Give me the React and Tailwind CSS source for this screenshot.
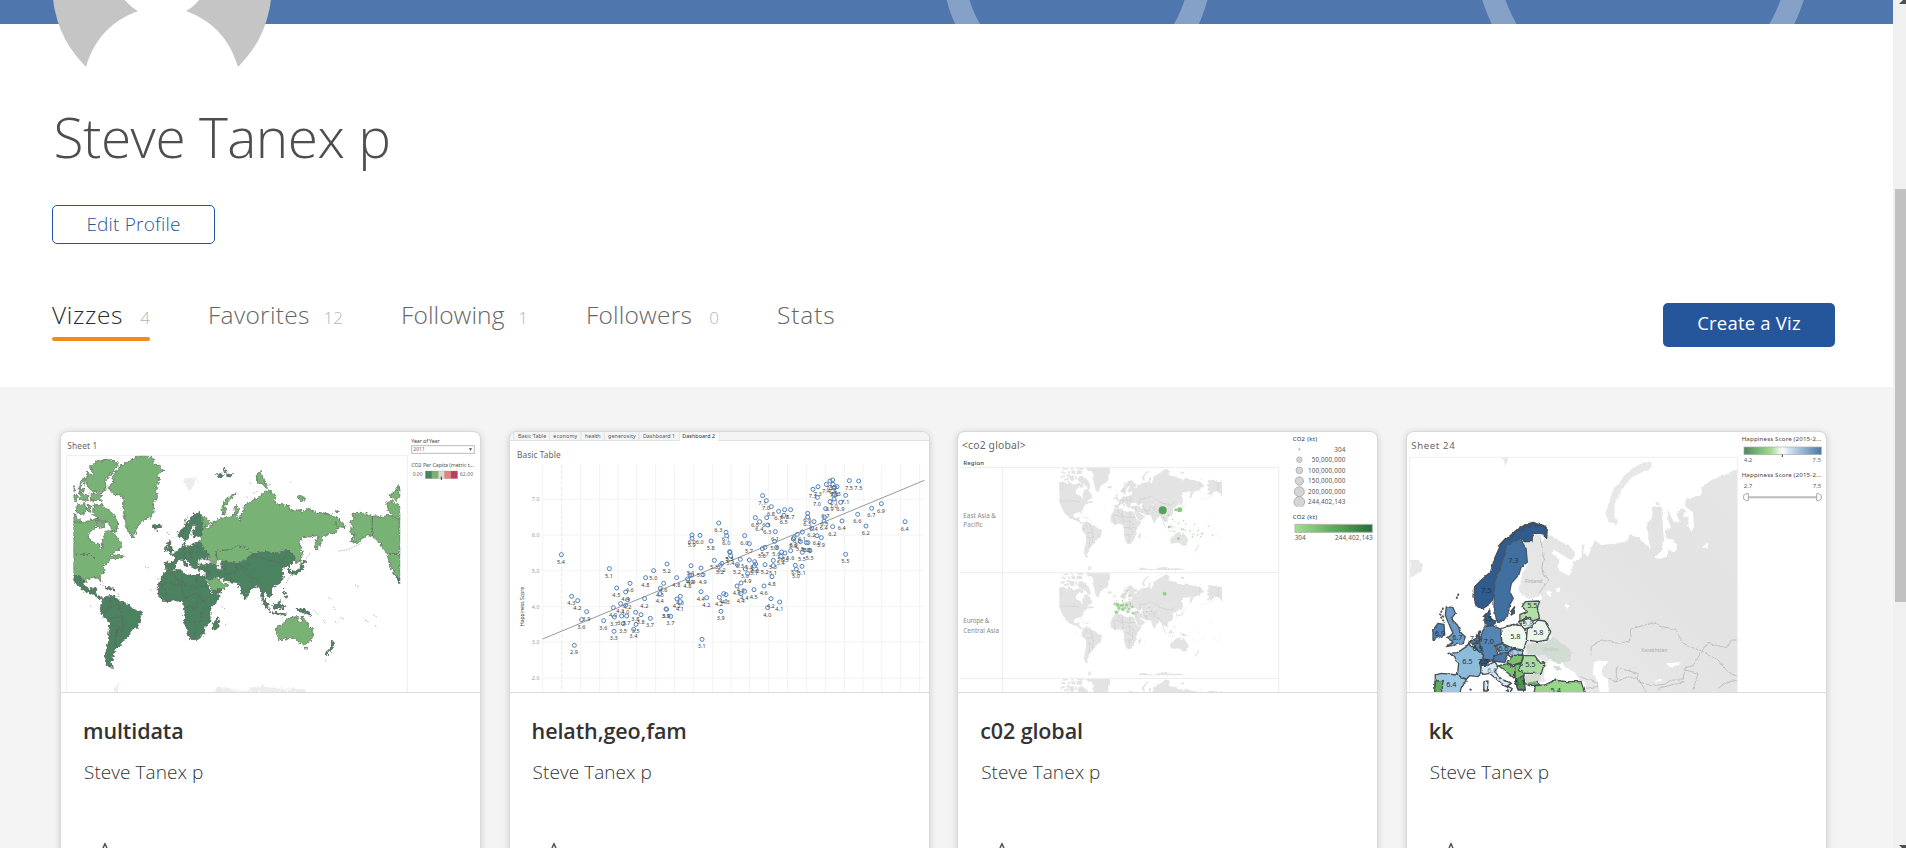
const INK = "#666";

/* World map outlines, shared by the two world-map thumbnails. */
const LIGHT = [
  "265,93 295,92 312,103 308,115 328,122 339,135 325,150 328,170 318,185 322,215 310,235 312,262 298,280 278,288 262,305 252,335 243,333 233,315 225,285 220,255 222,225 212,210 190,208 174,188 190,172 188,155 205,130 220,118 240,108",
  "122,125 140,108 170,103 195,108 205,120 190,140 178,155 165,160 168,185 158,203 130,200 112,185 108,165 112,142 130,152",
  "70,288 95,288 110,292 120,285 142,280 145,300 130,312 116,325 115,342 130,352 148,357 152,375 158,372 156,350 162,338 165,318 185,318 200,335 212,352 215,370 198,378 180,392 215,388 225,395 205,402 188,400 175,410 160,425 165,435 150,450 152,470 145,460 128,457 112,462 105,470 70,452",
  "130,240 155,238 175,255 190,268 203,292 200,322 188,318 180,300 165,290 148,285 128,265",
  "78,240 104,236 108,258 96,272 80,262", "112,238 122,240 122,262 112,258", "70,262 80,278 100,290 70,292",
  "120,205 154,207 153,226 122,228", "88,205 112,210 114,226 92,225", "70,180 76,186 74,198 70,200", "84,188 104,192 100,202 88,198",
  "98,158 106,162 104,178 96,172", "136,285 158,290 164,308 145,310", "70,208 82,212 80,226 70,224", "92,172 98,180 94,188 88,182",
  "455,275 470,280 482,295 470,305 462,300 468,312 482,308 485,292 500,288 515,280 530,278 545,275 555,268 552,250 562,240 565,255 560,275 570,285 575,265 580,260 578,245 600,230 620,220 640,205 655,195 672,205 680,215 668,228 685,238 720,242 722,255 750,255 760,262 775,250 800,262 830,265 860,275 880,295 885,308 868,305 855,325 840,325 830,332 818,335 815,350 800,373 795,358 800,345 805,330 785,335 755,338 745,360 752,365 758,385 750,410 738,415 735,395 710,372 690,385 640,380 605,388 580,410 540,415 520,405 505,405 500,415 490,415 478,405 475,388 455,370 448,350 455,330 450,305",
  "558,205 540,212 525,228 513,250 515,265 530,267 524,245 538,225",
  "622,145 634,140 640,165 654,182 650,190 634,178 622,172", "742,215 760,212 765,224 748,226", "856,258 868,260 860,265",
  "468,458 480,452 500,460 520,475 533,480 520,495 488,500",
  "680,605 700,598 712,582 725,577 745,575 742,587 752,592 757,573 768,590 785,612 789,630 778,652 765,658 750,655 735,640 715,640 688,645 680,625",
  "765,667 773,667 770,676",
  "905,265 930,262 945,265 967,275 980,272 1000,278 1015,268 1035,280 1050,280 1050,463 1035,448 1020,425 1012,390 1000,370 985,350 968,333 945,332 925,352 900,350 915,330 898,318 912,305 897,295 912,285",
  "1010,232 1030,230 1050,245 1050,285 1030,275 1015,258", "1015,212 1035,200 1048,180 1050,215 1040,226",
];
const DARK = [
  "70,452 90,456 100,465 104,486 118,493 128,488 140,488 135,503 145,512 158,518 150,524 138,515 120,503 100,497 86,482 70,468",
  "158,520 175,512 195,515 210,530 230,535 248,552 275,562 270,580 265,605 245,615 235,635 218,650 205,665 195,675 190,695 183,710 190,727 175,725 165,705 168,680 175,650 178,610 178,590 160,575 150,550 155,535",
  "385,335 385,322 400,310 415,290 430,268 450,262 456,275 456,332 430,335 428,318 440,302 433,297 420,318 415,340 405,350 398,335",
  "345,412 372,412 374,395 362,390 382,380 395,365 400,352 408,365 440,355 452,352 462,372 478,388 472,402 455,398 448,405 442,418 438,432 428,428 420,414 408,401 400,401 415,420 410,426 395,405 382,408 375,425 365,435 348,432",
  "352,350 362,348 362,362 372,375 365,382 352,378 355,365", "343,378 345,365 352,365 350,377", "308,300 330,298 332,308 318,315 308,310",
  "442,422 455,418 480,415 500,420 520,405 540,415 580,412 605,388 640,380 690,385 710,372 735,395 735,405 715,425 705,425 695,432 700,455 690,475 668,485 662,495 668,510 658,518 650,505 640,500 642,520 655,540 645,535 635,515 630,490 620,480 605,492 592,508 590,522 582,520 575,505 568,480 560,472 530,470 515,460 495,455 480,465 468,458 468,438 445,435",
  "488,500 515,488 517,498 492,508",
  "345,437 370,435 392,434 400,447 425,452 445,448 465,455 470,475 485,505 510,512 500,530 485,545 480,560 480,590 465,605 462,625 445,643 420,643 412,620 403,590 405,560 400,548 398,530 370,525 345,530 325,510 325,480 335,460",
  "505,577 508,590 500,612 490,612 490,595", "715,432 722,430 722,443 716,443",
  "718,440 738,438 750,430 754,414 766,406 768,410 758,415 758,434 740,446 722,448",
  "668,540 680,538 690,526 693,550 675,553", "634,518 645,530 660,556 652,552", "658,560 690,564 712,568 690,570", "698,540 704,542 700,556 696,552", "735,550 750,552 770,556 785,572 772,566 750,562",
  "700,492 706,508 713,520 704,516", "845,645 855,656 848,664 846,655", "846,663 850,668 832,689 825,686", "160,484 180,490 196,494 184,496", "1034,450 1050,462 1050,476",
  "500,150 520,148 515,158 502,155", "520,133 530,136 524,144", "530,148 548,146 542,156 532,154",
];
const BORDERS =
  "M70 388H118L135 398 M967 275V333 M1014 388H1050 M498 378L540 374L560 362L585 366L604 386 M498 378L502 405 M606 390L640 402L690 412L708 392 M330 488L352 470L400 488L398 520 M362 438L398 486 M395 447V478L440 490V450 M440 485H472 M345 488L350 526 M400 520L440 505L470 540 M440 505V545L405 548 M425 550L455 560V590H412 M435 590V640 M455 545L478 552 M180 520L184 545L160 560 M200 520L215 575L180 580 M215 575L222 600L200 612L185 600 M200 612L196 670 M222 600L212 640 M520 420L530 450L560 440L560 415 M540 445L545 470 M590 430L575 460 M590 450L620 465L632 485 M600 420L570 432 M403 300L412 275 M400 340L398 320L415 290 M438 270L434 296 M400 370L405 398 M418 360L425 400 M440 356L446 396 M385 382L400 392 M405 382L440 384 M365 412L385 406 M470 420L478 452 M858 275V305 M645 487L655 500 M760 552V564";
const ANTARCTICA = [
  "490,801 500,788 530,787 550,795 590,798 600,790 640,782 680,790 700,793 730,790 765,796 770,801", "190,801 195,785 215,770 205,785 206,801",
];
const SPECKS =
  "M285 425l12 4 M300 495l8 3 M322 462h10 M355 330l5 -8 M350 322l6 2 M515 545l10 6 M525 600l8 -4 M610 205l12 -6 M590 215l4 6 M600 172l4 8 M720 170l6 6 M915 480l14 8 M835 518l10 4 M850 545l6 10 M870 578l12 4 M945 585l14 8 M970 570l10 6 M975 602l8 4 M820 585l8 14 M855 590l8 4 M120 543l8 2 M865 378l30 -4l40 -20 M780 385l-12 18 M722 450l-14 26 M825 706l6 4 M790 555l14 14 M500 150l30 -14 M150 478l20 8l26 4 M205 505l2 12 M150 462l12 14";

function Polys({ list }) {
  return list.map((p) => <polygon key={p} points={p} />);
}

function Roughen({ id, scale, freq }) {
  return (
    <filter id={id} x="-5%" y="-5%" width="110%" height="110%">
      <feTurbulence type="fractalNoise" baseFrequency={freq} numOctaves="2" seed="4" />
      <feDisplacementMap in="SourceGraphic" scale={scale} xChannelSelector="R" yChannelSelector="G" />
    </filter>
  );
}

function Thumb({ x, children }) {
  return (
    <svg
      className="block h-[260px] w-full font-['Noto_Sans',sans-serif]"
      viewBox={`${x} 21 1257 780`}
      preserveAspectRatio="none"
    >
      {children}
    </svg>
  );
}

function CarbonMap() {
  return (
    <Thumb x={33}>
      <defs>
        <Roughen id="coast" scale="16" freq="0.12" />
        <clipPath id="world"><rect x="70" y="92" width="981" height="709" /></clipPath>
      </defs>
      <text x="52" y="71" fontSize="25" fill={INK} textLength="90">Sheet 1</text>
      <path d="M49 801V92H1072V801" fill="none" stroke="#eee" strokeWidth="3" />
      <g clipPath="url(#world)">
        <g filter="url(#coast)" strokeWidth="3" stroke="#6f7f70" strokeLinejoin="round">
          <g fill="#79b275"><Polys list={LIGHT} /></g>
          <g fill="#4b825f" stroke="#5f7064"><Polys list={DARK} /></g>
          <g fill="#fff" stroke="#8a8a8a" strokeWidth="2">
            <path d="M503 402L512 403L510 420L518 433L505 433L498 418Z M448 405L465 400L485 412L460 419L446 415Z" />
          </g>
          <path d={BORDERS} fill="none" stroke="#5e6a61" strokeWidth="2.5" />
        </g>
        <path d={SPECKS} fill="none" stroke="#9a9f9a" strokeWidth="2.500" strokeDasharray="4 4" />
        <g fill="#ececec" filter="url(#coast)">
          <Polys list={ANTARCTICA} />
          <polygon points="400,165 415,158 445,158 430,180 420,200 412,185" />
        </g>
      </g>
      <text x="1084" y="54" fontSize="16" fill="#444" textLength="85">Year of Year</text>
      <rect x="1085" y="62" width="188" height="23" fill="#fff" stroke="#bbb" strokeWidth="3" />
      <text x="1090" y="78" fontSize="15" fill={INK}>2011</text>
      <path d="M1257 70h9l-4.500 7z" fill="#444" />
      <text x="1084" y="125" fontSize="16" fill="#555" textLength="187">CO2 Per Capita (metric t...</text>
      <text x="1088" y="154" fontSize="15" fill={INK}>0.00</text>
      <g stroke="#999" strokeWidth="1">
        <rect x="1126" y="138" width="20" height="23" fill="#4b825f" />
        <rect x="1146" y="138" width="19" height="23" fill="#79b275" />
        <rect x="1165" y="138" width="19" height="23" fill="#d8dccb" />
        <rect x="1184" y="138" width="18" height="23" fill="#f28072" />
        <rect x="1202" y="138" width="21" height="23" fill="#bd3d5e" />
      </g>
      <path d="M1174 155v10" stroke="#333" strokeWidth="3" />
      <text x="1229" y="154" fontSize="15" fill={INK} textLength="40">62.00</text>
    </Thumb>
  );
}

const POINTS = [
  [183, 389, 5.4], [327, 431, 5.1], [214, 514, 4.3], [232, 527, 4.2], [259, 560, 3.9], [244, 584, 3.6], [222, 661, 2.9], [310, 587, 3.6],
  [341, 619, 3.3], [342, 576, 3.7], [339, 548, 4.0], [349, 489, 4.5], [389, 475, 4.6], [376, 501, 4.4], [382, 524, 4.2], [361, 536, 4.1],
  [376, 541, 4.0], [364, 573, 3.7], [379, 573, 3.7], [369, 596, 3.5], [407, 598, 3.5], [400, 613, 3.4], [406, 562, 3.8], [422, 569, 3.8],
  [450, 580, 3.7], [433, 521, 4.2], [436, 458, 4.8], [460, 437, 5.0], [500, 417, 5.2], [490, 475, 4.6], [480, 490, 4.5], [479, 506, 4.4],
  [529, 458, 4.8], [530, 522, 4.2], [540, 514, 4.3], [540, 530, 4.1], [497, 552, 3.9], [499, 553, 3.9], [511, 574, 3.7], [605, 643, 3.1],
  [572, 422, 5.1], [602, 429, 5.1], [569, 450, 4.9], [574, 450, 4.9], [562, 462, 4.8], [608, 449, 4.9], [602, 500, 4.4], [619, 518, 4.2],
  [657, 517, 4.2], [670, 506, 4.3], [677, 509, 4.3], [662, 559, 3.9], [575, 330, 6.0], [575, 340, 5.9], [599, 331, 6.0], [632, 348, 5.8],
  [655, 294, 6.3], [677, 322, 6.1], [679, 332, 6.0], [733, 332, 6.0], [747, 356, 5.7], [688, 380, 5.5], [689, 382, 5.5], [691, 392, 5.4], [642, 406, 5.3],
  [660, 421, 5.2], [665, 415, 5.2], [720, 403, 5.3], [711, 419, 5.2], [747, 405, 5.3], [735, 432, 5.0], [742, 446, 4.9], [763, 410, 5.2],
  [766, 417, 5.2], [762, 423, 5.1], [794, 419, 5.2], [819, 406, 5.3], [819, 422, 5.1], [815, 455, 4.8], [722, 474, 4.6], [710, 483, 4.6],
  [733, 499, 4.4], [722, 506, 4.4], [761, 494, 4.5], [791, 483, 4.6], [812, 521, 4.2], [838, 531, 4.1], [802, 548, 4.0], [786, 371, 5.6],
  [794, 367, 5.7], [823, 349, 5.8], [829, 367, 5.6], [844, 381, 5.5], [854, 384, 5.5], [842, 394, 5.4], [871, 377, 5.6], [825, 320, 6.1],
  [802, 300, 6.3], [799, 278, 6.5], [778, 290, 6.4], [765, 278, 6.5], [787, 212, 7.1], [798, 227, 7.0], [813, 245, 6.8], [835, 259, 6.7],
  [853, 254, 6.7], [871, 254, 6.7], [851, 271, 6.5], [879, 342, 5.9], [881, 338, 5.9], [891, 328, 6.0], [906, 321, 6.1], [900, 350, 5.8],
  [918, 353, 5.8], [923, 353, 5.8], [906, 382, 5.5], [929, 377, 5.5], [885, 421, 5.1], [905, 424, 5.1], [888, 433, 5.0], [950, 332, 6.0],
  [963, 338, 5.9], [934, 310, 6.2], [941, 290, 6.4], [922, 265, 6.6], [922, 276, 6.5], [973, 277, 6.5], [971, 288, 6.4], [997, 305, 6.2],
  [1025, 288, 6.4], [976, 251, 6.7], [989, 230, 6.9], [1001, 222, 7.0], [1021, 232, 6.9], [951, 217, 7.0], [938, 193, 7.3], [953, 185, 7.3],
  [978, 178, 7.4], [989, 168, 7.5], [997, 165, 7.5], [998, 178, 7.4], [1001, 189, 7.3], [1003, 187, 7.3], [1010, 185, 7.3], [1002, 210, 7.1], [1036, 211, 7.1],
  [1047, 167, 7.5], [1075, 168, 7.5], [1072, 268, 6.6], [1097, 303, 6.2], [1114, 250, 6.7], [1143, 236, 6.9], [1214, 290, 6.4], [1036, 388, 5.5],
];
const SHEETS = [["Basic Table", 53, 85], ["economy", 159, 72], ["health", 254, 47], ["generosity", 323, 83], ["Dashboard 1", 428, 96], ["Dashboard 2", 546, 98]];

function ScatterPlot() {
  return (
    <Thumb x={29}>
      <rect x="29" y="21" width="1258" height="26" fill="#f4f4f4" />
      <path d="M29 46.500H1287 M40 21V46 M148 21V46 M242 21V46 M312 21V46 M416 21V46" stroke="#ddd" strokeWidth="2.500" />
      <path d="M537 48V21H656V48" fill="#fff" stroke="#ddd" strokeWidth="2" />
      {SHEETS.map(([name, x, w], i) => (
        <text key={name} x={x} y="39" fontSize="16" fill={i === 5 ? "#222" : "#555"} textLength={w}>{name}</text>
      ))}
      <text x="50" y="99" fontSize="25" fill={INK} textLength="131">Basic Table</text>
      <g stroke="#f3f3f3" strokeWidth="3">
        {[127, 241, 298, 353, 409, 466, 522, 579, 637, 692, 748, 805, 862, 919, 975, 1032, 1088, 1144, 1201, 1258].map((x) => (
          <path key={x} d={`M${x} 118V801`} />
        ))}
        {[223, 330, 437, 544, 651, 759].map((y) => <path key={y} d={`M127 ${y}H1272`} />)}
      </g>
      <path d="M184 118V801" stroke="#e6e6e6" strokeWidth="3" strokeDasharray="12 5" />
      {["7.0", "6.0", "5.0", "4.0", "3.0", "2.0"].map((t, i) => (
        <text key={t} x="94" y={229 + i * 107.2} fontSize="16" fill="#999" textLength="24">{t}</text>
      ))}
      <text transform="translate(72 603) rotate(-90)" fontSize="15" fill="#333" textLength="117">Happiness Score</text>
      <path d="M127 642L1272 166" stroke="#999" strokeWidth="3" />
      <g fontSize="16.500" fill="#3c3c3c" textAnchor="middle">
        {POINTS.map(([x, y, v], i) => <text key={i} x={x - 1} y={y + 27} textLength="24">{v.toFixed(1)}</text>)}
      </g>
      <g fill="none" stroke="#4f81bd" strokeWidth="3">
        {POINTS.map(([x, y], i) => <circle key={i} cx={x} cy={y} r="6" />)}
      </g>
    </Thumb>
  );
}

const ASIA_DOTS = [[677, 254, 4.500], [642, 236, 1.5], [641, 278, 2], [655, 270, 2], [667, 283, 2], [657, 306, 4], [645, 287, 2], [685, 295, 2], [701, 287, 2], [707, 296, 2], [733, 298, 2], [745, 316, 2], [720, 318, 2], [757, 326, 2.500], [729, 328, 2], [753, 335, 2], [775, 304, 2], [788, 331, 2], [685, 341, 4], [673, 319, 2], [695, 313, 2], [743, 330, 2], [727, 335, 2]];
const EUROPE_DOTS = [[644, 506, 6], [452, 484, 1.500], [502, 539, 6], [499, 562, 4.500], [518, 553, 5], [530, 540, 4.500], [506, 549, 4.500], [512, 541, 4], [518, 541, 3.500], [533, 560, 3.500], [537, 551, 3], [547, 545, 3.500], [550, 565, 3.500], [562, 562, 2.500], [540, 512, 2], [533, 497, 2], [517, 527, 2], [538, 523, 2], [493, 514, 2], [590, 560, 2], [597, 547, 1.500], [605, 558, 2], [493, 537, 3], [525, 549, 3], [541, 536, 2.500], [528, 506, 1.500], [517, 516, 1.500]];

function GreyWorld({ dy }) {
  return (
    <g transform={`translate(0 ${dy})`}>
      <g transform="translate(319 33) scale(.502)">
        <g filter="url(#coast-soft)" fill="#e3e3e3">
          <Polys list={LIGHT} />
          <Polys list={DARK} />
          <polygon points="16,278 42,272 92,300 120,290 116,340 70,400 20,390" />
          <polygon points="16,380 80,380 120,450 100,470 104,488 130,492 150,524 120,505 78,490 50,462 32,430 18,390" />
          <path d="M30 215l24 6 M40 200l30 -6 M60 235l30 8 M25 248l26 -8 M45 262l30 -8 M22 190l16 -8" stroke="#e3e3e3" strokeWidth="10" />
          <path d="M503 402L512 403L510 420L518 433L505 433L498 418Z M448 405L465 400L485 412L460 419L446 415Z" fill="#fff" />
          <path d={BORDERS} fill="none" stroke="#c6c6c6" strokeWidth="3" />
          <path d="M20 388H70 M34 278V325" stroke="#cfcfcf" strokeWidth="3" />
          <Polys list={ANTARCTICA} />
        </g>
        <path d={SPECKS} fill="none" stroke="#d8d8d8" strokeWidth="3.500" strokeDasharray="5 5" />
      </g>
    </g>
  );
}

function RegionMaps() {
  return (
    <Thumb x={24}>
      <defs>
        <Roughen id="coast-soft" scale="14" freq="0.08" />
        <clipPath id="r1"><rect x="327" y="128" width="489" height="313" /></clipPath>
        <clipPath id="r2"><rect x="327" y="445" width="489" height="313" /></clipPath>
        <clipPath id="r3"><rect x="327" y="762" width="489" height="39" /></clipPath>
        <linearGradient id="greens"><stop offset="0" stopColor="#a5dd94" /><stop offset=".5" stopColor="#5bab5c" /><stop offset="1" stopColor="#21703c" /></linearGradient>
      </defs>
      <text x="36" y="71" fontSize="31" fill={INK} textLength="191">&lt;co2 global&gt;</text>
      <text x="40" y="119" fontSize="18" fontWeight="500" fill="#444" textLength="62">Region</text>
      <g clipPath="url(#r1)"><GreyWorld dy={0} /></g>
      <g clipPath="url(#r2)"><GreyWorld dy={316} /></g>
      <g clipPath="url(#r3)"><GreyWorld dy={632} /></g>
      <path d="M30 127H986 M30 443H986 M30 760H986 M157 127V801 M986 127V801" stroke="#e8e8e8" strokeWidth="2.500" />
      <g fontSize="19" fill="#888">
        <text x="40" y="278" textLength="98">East Asia &amp;</text>
        <text x="40" y="306" textLength="58">Pacific</text>
        <text x="40" y="594" textLength="78">Europe &amp;</text>
        <text x="40" y="623" textLength="107">Central Asia</text>
      </g>
      <circle cx="638" cy="256" r="12" fill="#55a155" />
      <circle cx="689" cy="254" r="7.500" fill="#84cc7a" />
      <g fill="#8bd07f" fillOpacity=".9">
        {[...ASIA_DOTS, ...EUROPE_DOTS].map(([x, y, r]) => <circle key={`${x}-${y}`} cx={x} cy={y} r={r} />)}
      </g>
      <text x="1028" y="49" fontSize="18" fill="#333" textLength="73">CO2 (kt)</text>
      {[[73, 2, "304", 33], [104, 8, "50,000,000", 101], [136, 10, "100,000,000", 112], [168, 12.500, "150,000,000", 112], [200, 15, "200,000,000", 112], [231, 16, "244,402,143", 112]].map(([y, r, t, w]) => (
        <g key={t}>
          <circle cx="1048" cy={y} r={r} fill="#d5d5d5" stroke="#aaa" strokeWidth="2.500" />
          <text x={1186 - w} y={y + 7} fontSize="19" fill="#555" textLength={w}>{t}</text>
        </g>
      ))}
      <path d="M1030 247h36" stroke="#fff" strokeWidth="4" />
      <text x="1028" y="281" fontSize="18" fill="#333" textLength="73">CO2 (kt)</text>
      <rect x="1035" y="298" width="232" height="24" fill="url(#greens)" stroke="#b5b5a8" strokeWidth="3" />
      <text x="1034" y="344" fontSize="19" fill="#555" textLength="33">304</text>
      <text x="1155" y="344" fontSize="19" fill="#555" textLength="113">244,402,143</text>
    </Thumb>
  );
}

function HappinessMap() {
  return (
    <Thumb x={27}>
      <defs>
        <Roughen id="coast-fine" scale="9" freq="0.07" />
        <clipPath id="eu"><rect x="35" y="97" width="983" height="704" /></clipPath>
        <linearGradient id="score"><stop offset="0" stopColor="#4d8a5f" /><stop offset=".35" stopColor="#a5dc93" /><stop offset=".5" stopColor="#fff" /><stop offset=".58" stopColor="#cfe5f2" /><stop offset="1" stopColor="#4d76a4" /></linearGradient>
        <linearGradient id="terrain" x1="0" y1="1" x2="1" y2="0"><stop offset="0" stopColor="#e9e9e9" /><stop offset=".6" stopColor="#e3e3e3" /><stop offset="1" stopColor="#e5e5e5" /></linearGradient>
      </defs>
      <text x="40" y="71" fontSize="29" fill={INK} textLength="130">Sheet 24</text>
      <g clipPath="url(#eu)">
        <g filter="url(#coast-fine)">
          <path fill="url(#terrain)" d="M1025 130L1000 140L965 155L940 165L910 188L912 208L862 226L866 248L885 262L888 305L880 322L870 300L872 275L855 275L862 255L850 250L835 265L845 290L830 295L815 268L808 250L812 290L820 310L800 318L806 340L828 345L840 370L828 382L812 372L806 395L785 402L770 398L790 378L798 345L795 310L790 245L765 245L762 280L748 295L752 345L758 372L740 355L720 338L695 326L690 348L660 355L610 360L590 345L570 395L556 385L560 358L552 360L550 400L525 412L520 440L512 452L490 440L478 425L485 410L478 395L460 385L470 376L520 405L533 388L520 366L490 350L460 335L446 328L440 340L432 352L428 330L408 325L405 350L368 345L385 375L390 415L372 450L362 490L372 512L400 520L432 512L430 525L415 530L425 580L455 600L460 640L440 650L385 648L380 690L420 695L440 720L432 745L400 742L380 750L372 775L440 770L470 762L520 762L560 770L560 801H1030Z" />
          <path fill="#e8e8e8" d="M760 112L735 112L700 132L665 170L645 195L635 225L622 265L632 292L655 302L660 290L650 270L650 235L672 192L700 158L740 138L762 128Z M35 405L62 405L75 420L70 440L35 458Z M308 97H332L328 110L322 122L318 106Z M772 232l8 -4l6 12l-10 2z" />
          <path fill="#fff" d="M440 728L455 700L480 700L500 726L530 742L545 766L515 764L470 770L438 766Z M588 712L610 704L632 710L612 730L612 752L630 762L632 801H605L600 770L584 744Z M806 715L845 712L844 720L815 727Z M470 728L488 724L500 732L490 738Z M445 500L458 498L460 515L450 512Z M472 486L488 488L484 502L475 500Z M500 535L515 543L506 552Z M915 365L930 352L928 372Z M765 770L792 760L790 768Z" />
          <g stroke="#adadad" strokeWidth="2" fill="none">
            <path d="M578 690L580 665L610 645L660 655L695 648L698 612L770 592L790 605L830 612L860 660L912 678L885 722L862 728L855 765L820 765L800 778L760 782L722 770L720 745L655 728L655 770L630 762 M912 678L930 655L985 668L1000 645H1025 M912 678L960 705L990 740L1020 755 M862 735L900 745L885 795 M780 790L860 770 M655 770L690 755L720 760L745 801 M425 340L438 385L432 430L450 468L420 508 M545 755L600 775 M560 790L600 785 M960 790L990 770L1020 766" />
          </g>
          <g stroke="#4a4f55" strokeWidth="4" strokeLinejoin="round">
            <path fill="#2d5b8e" d="M448 305L446 340L430 325L405 325L402 350L380 350L365 340L350 350L325 365L315 400L300 440L290 470L288 515L278 535L255 550L235 545L228 515L230 485L250 465L278 440L290 400L310 355L350 320L380 300L405 292Z" />
            <path fill="#3f6f9f" stroke="#46586b" d="M325 362L350 347L368 345L384 370L388 412L370 425L362 450L340 475L335 500L346 520L335 540L328 575L308 590L296 588L288 545L290 470L302 440L316 400Z" />
            <path fill="#2d5b8e" d="M258 572L275 555L278 580L292 590L290 602L272 605L262 600Z M338 560L350 545L346 562L340 570Z" />
            <path fill="#6a9bc8" d="M145 545L165 548L172 565L160 580L168 590L178 600L190 625L202 635L195 655L145 665L165 650L148 640L165 625L150 590L142 570Z" />
            <path fill="#4e82b4" d="M105 615L120 595L138 598L140 630L105 645Z M235 640L245 618L246 650L225 655L212 652L225 645Z M225 655L248 655L258 690L240 680Z" />
            <path fill="#5585b5" d="M252 622L262 605L285 602L308 612L312 655L292 662L300 690L328 690L320 710L265 708L248 700L255 690L245 655Z" />
            <path fill="#4a78ab" d="M290 692L325 682L330 690L320 712L285 708Z" />
            <path fill="#2c5684" d="M240 712L250 700L275 705L268 718L246 720Z" />
            <path fill="#8dbbdc" d="M150 685L178 683L205 665L212 655L258 692L245 712L250 740L240 755L215 752L205 762L178 750L182 715L170 695Z" />
            <path fill="#9cc8e2" d="M112 750L130 745L178 750L205 764L190 790L185 806H110Z" />
            <path fill="#5caf5a" d="M112 768L136 766L130 806H110Z" />
            <path fill="#d5e9f4" d="M248 742L250 720L268 722L290 710L300 725L290 740L310 762L340 775L325 785L310 775L275 745L258 748Z M258 770L270 768L268 798L257 798Z M330 784L345 792L335 801L325 796Z" />
            <path fill="#6c9fcc" d="M295 662L318 655L345 668L330 682L305 685Z" />
            <path fill="#abd0e8" d="M330 684L345 672L376 678L372 690L335 694Z" />
            <path fill="#f1faf1" d="M308 612L345 598L380 605L388 640L376 675L345 670L312 655Z" />
            <path fill="#eaf6ea" d="M385 645L388 612L420 585L440 588L458 620L448 645L420 650Z" />
            <path fill="#b1dfa6" d="M365 590L366 568L388 560L372 545L382 530L425 528L418 550L425 580L400 590L385 578Z" />
            <path fill="#e4f4e2" d="M366 590L392 580L405 588L402 605L380 612L370 602Z" />
            <path fill="#7bc16e" d="M325 712L345 692L376 690L370 712L345 720Z M350 720L370 715L378 745L380 795L360 795L350 765Z M302 722L330 715L350 730L352 762L325 740Z" />
            <path fill="#4e9a50" d="M352 765L376 752L382 795L360 792Z" />
            <path fill="#abdc9f" d="M362 735L378 692L410 692L428 715L440 712L430 745L380 745Z" />
            <path fill="#76bf69" d="M380 775L415 765L425 780L395 782Z" />
            <path fill="#97d787" d="M408 806L412 782L440 780L470 765L505 770L550 770L560 806Z" />
          </g>
          <path fill="#d2dcd3" d="M382 660L420 652L445 655L465 635L488 650L525 680L515 705L480 718L470 708L455 702L438 690L390 688Z M378 755L425 742L428 765L385 775Z M465 725l18 -2l8 10l-16 4z" />
        </g>
        <path d="M182 506l-8 18 M136 548l-10 20l12 8 M128 575l12 18 M215 792l8 6 M325 603l60 -10" stroke="#51565b" strokeWidth="5" strokeDasharray="7 3" fill="none" />
        <path d="M300 365l20 -22l24 -8l12 -20l18 2l8 -16l14 6l8 -14l10 12l16 -6l14 12" stroke="#454d56" strokeWidth="4" fill="none" />
        <g fontSize="22" fill="#25313d" textAnchor="middle">
          {[[346, 414, "7.3"], [265, 504, "7.5"], [267, 589, "7.5"], [126, 632, "6.9"], [178, 645, "6.7"], [272, 657, "7.0"], [231, 647, "7.3"], [239, 679, "6.9"], [208, 718, "6.5"], [255, 716, "7.5"], [316, 677, "6.6"], [352, 642, "5.8"], [421, 631, "5.8"], [397, 726, "5.5"], [160, 787, "6.4"], [473, 803, "5.4"], [403, 548, "5.5"], [366, 780, "5.1"]].map(([x, y, t]) => (
            <text key={`${x}-${y}`} x={x} y={y}>{t}</text>
          ))}
          <g fill="#6c7e8a"><text x="283" y="744">6.0</text><text x="350" y="690">6.1</text><text x="390" y="602">5.8</text></g>
        </g>
        <g fontSize="15" fill="#aaa" textAnchor="middle">
          <text x="407" y="473" textLength="52">Finland</text>
          <text x="769" y="682" fontSize="14" textLength="78">Kazakhstan</text>
          <text x="456" y="678" fill="#bccabd" textLength="50">Ukraine</text>
        </g>
      </g>
      <path d="M35 801V97H1018V801" fill="none" stroke="#eee" strokeWidth="3" />
      <g fontSize="18.500" fill="#444">
        <text x="1031" y="49" textLength="239">Happiness Score (2015-2...</text>
        <text x="1031" y="156" textLength="239">Happiness Score (2015-2...</text>
        <g fill={INK}>
          <text x="1037" y="112">4.2</text><text x="1243" y="112">7.5</text>
          <text x="1037" y="190">2.7</text><text x="1244" y="190">7.5</text>
        </g>
      </g>
      <rect x="1038" y="66" width="232" height="23" fill="url(#score)" stroke="#aaa" strokeWidth="2" />
      <path d="M1153 89v7" stroke="#333" strokeWidth="3" />
      <path d="M1050 217H1258" stroke="#bbb" strokeWidth="6" />
      <path d="M1051 206V227H1045L1037 222V211L1045 206Z M1256 206V227H1262L1270 222V211L1262 206Z" fill="#fff" stroke="#999" strokeWidth="2.500" />
    </Thumb>
  );
}

const TABS = [
  ["Vizzes", "4", "w-[98px]", "text-[#2b2b2b]", "tracking-[0.65px]"],
  ["Favorites", "12", "w-[135px]", "text-[#666]", "tracking-[0.3px]"],
  ["Following", "1", "w-[127px]", "text-[#666]", "tracking-[0.1px]"],
  ["Followers", "0", "w-[133px]", "text-[#666]", "tracking-[0.2px]"],
  ["Stats", "", "w-[60px]", "text-[#666]", "tracking-[0.9px]"],
];

const CARDS = [
  ["multidata", CarbonMap],
  ["helath,geo,fam", ScatterPlot],
  ["c02 global", RegionMaps],
  ["kk", HappinessMap],
];

function Card({ title, Viz }) {
  return (
    <article className="flex h-[500px] w-[421px] flex-none flex-col overflow-hidden rounded-t-[8px] border border-[#dadada] bg-white shadow-[0_1px_7px_rgba(0,0,0,0.16)]">
      <Viz />
      <div className="flex flex-col border-t border-[#dadada] px-[22px] pt-[23px]">
        <h2 className="text-[21.500px] leading-[30px] font-semibold tracking-[-0.1px] text-[#333]">{title}</h2>
        <p className="mt-[12px] pl-px text-[19px] leading-[28px] font-[350] tracking-[0.05px] text-[#333]">Steve Tanex p</p>
        <svg className="mt-[56px] ml-[12px] h-[20px] w-[20px]" viewBox="0 0 20 20" fill="none" stroke="#555" strokeWidth="1.500" strokeLinejoin="round">
          <path d="M10 1.500L12.700 8L19 8.500L14.300 12.300L15.600 18.500L10 15.400L4.400 18.500L5.700 12.300L1 8.500L7.300 8Z" />
        </svg>
      </div>
    </article>
  );
}

export default function App() {
  return (
    <div className="flex h-[848px] w-[1906px] overflow-hidden bg-white font-['Open_Sans',sans-serif]">
      <main className="flex w-[1893px] flex-none flex-col overflow-hidden">
        <header className="relative h-[24px] flex-none bg-[#4f77ae]">
          <svg className="absolute top-0 left-0 h-[24px] w-[1893px]" viewBox="0 0 1893 24" fill="none" stroke="#86a1c8" strokeWidth="22">
            <circle cx="1077" cy="-33" r="123.500" />
            <circle cx="1643" cy="-49" r="157" />
          </svg>
          <svg className="absolute top-0 left-[52px] h-[98px] w-[220px]" viewBox="52 0 220 98">
            <circle cx="162" cy="-12" r="109.500" fill="#c5c5c5" />
            <circle cx="162" cy="-30.500" r="48" fill="#fff" />
            <path d="M86 67C93 43 108 22 138 11L139 0H185L186 11C216 22 231 43 238 67L236 98H88Z" fill="#fff" />
          </svg>
        </header>
        <section className="flex h-[363px] flex-none flex-col px-[52px]">
          <h1 className="mt-[75px] h-[76px] pl-[1.500px] text-[55px] leading-[76px] font-[350] tracking-[-0.5px] whitespace-nowrap text-[#4e4e4e]">Steve Tanex p</h1>
          <button className="mt-[30px] h-[39px] w-[163px] rounded-[5px] border border-[#25569b] pb-[1px] text-[19px] font-[350] tracking-[0.2px] text-[#25569b]">Edit Profile</button>
          <div className="mt-[53px] flex items-start justify-between">
            <nav className="flex gap-[58px]">
              {TABS.map(([name, count, width, color, tracking], i) => (
                <div key={name} className={`flex h-[44px] items-baseline justify-between text-[24.500px] leading-[36px] font-[350] ${width} ${color} ${i === 0 ? "relative" : ""}`}>
                  <span className={tracking}>{name}</span>
                  <span className="text-[17px] font-light text-[#b5b5b5]">{count}</span>
                  {i === 0 && <span className="absolute bottom-0 left-0 h-[4px] w-full rounded-[2px] bg-[#f28a1d]" />}
                </div>
              ))}
            </nav>
            <button className="mt-[6px] mr-[6px] h-[44px] w-[172px] rounded-[5px] bg-[#25569b] pb-[4px] text-[18.500px] tracking-[0.2px] text-white">Create a Viz</button>
          </div>
        </section>
        <section className="flex flex-1 gap-[27.600px] overflow-hidden bg-[#f4f4f4] pt-[44px] pl-[60px]">
          {CARDS.map(([title, Viz]) => <Card key={title} title={title} Viz={Viz} />)}
        </section>
      </main>
      <aside className="flex w-[13px] flex-none flex-col items-end bg-[#f0f0f0]">
        <svg className="h-[189px] w-[13px]" viewBox="0 0 13 189"><path d="M6 4L13 -3V4Z" fill="#505050" /></svg>
        <div className="h-[413px] w-[11px] bg-[#c1c1c1]" />
        <svg className="h-[246px] w-[13px]" viewBox="0 0 13 246"><path d="M6 243H13V250Z" fill="#505050" /></svg>
      </aside>
    </div>
  );
}
